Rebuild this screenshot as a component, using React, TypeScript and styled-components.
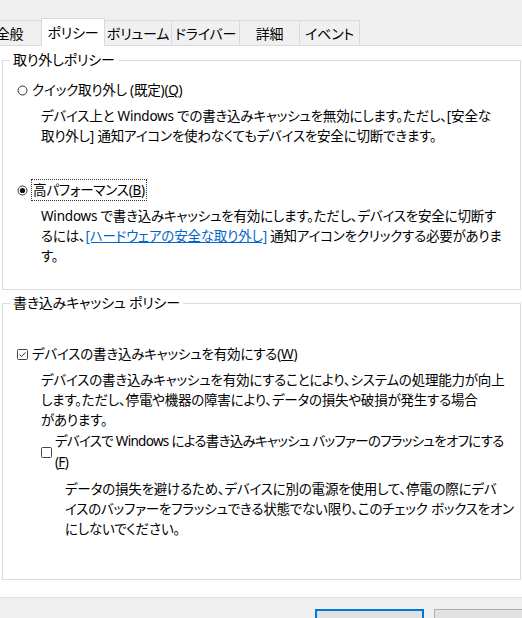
import styled, { createGlobalStyle } from "styled-components"

const GlobalStyle = createGlobalStyle`
  html, body {
    margin: 0;
    padding: 0;
    background: #f0f0f0;
  }
  body {
    font-family: "Noto Sans", "Noto Sans CJK JP", sans-serif;
    font-feature-settings: "palt";
    color: #000;
  }
`

const TABS = [
  { label: "全般", width: 65 },
  { label: "ポリシー", width: 64, selected: true },
  { label: "ボリューム", width: 68 },
  { label: "ドライバー", width: 69 },
  { label: "詳細", width: 61 },
  { label: "イベント", width: 61 },
]

const Window = styled.div`
  width: 522px;
  height: 618px;
  overflow: hidden;
  display: flex;
  flex-direction: column;
  padding-top: 18px;
  box-sizing: border-box;
  font-size: 13.5px;
  letter-spacing: -0.2px;
  line-height: 20px;
`

const TabStrip = styled.div`
  display: flex;
  align-items: flex-end;
  height: 28px;
  flex-shrink: 0;
  margin-left: -23px;
`

const Tab = styled.div<{ $selected?: boolean; $w: number }>`
  width: ${(p) => p.$w}px;
  height: ${(p) => (p.$selected ? 28 : 26)}px;
  box-sizing: border-box;
  flex-shrink: 0;
  margin-right: -1px;
  border: 1px solid #d9d9d9;
  border-bottom: ${(p) => (p.$selected ? "none" : "1px solid #d9d9d9")};
  background: ${(p) => (p.$selected ? "#fff" : "#f0f0f0")};
  display: flex;
  justify-content: center;
  align-items: center;
  padding-top: ${(p) => (p.$selected ? 0 : 1)}px;
  font-size: 14px;
`

const TabFill = styled.div`
  flex: 1;
  border-bottom: 1px solid #d9d9d9;
  margin-left: 1px;
`

const Panel = styled.div`
  flex: 1;
  background: #fff;
  padding: 4px 1px 0 2px;
  display: flex;
  flex-direction: column;
  gap: 3px;
`

const Group = styled.fieldset<{ $h: number; $top: number }>`
  margin: 0;
  height: ${(p) => p.$h}px;
  box-sizing: border-box;
  border: 1px solid #dcdcdc;
  padding: ${(p) => p.$top}px 0 0 14px;
  min-width: 0;
`

const Legend = styled.legend`
  padding: 0 3px;
  margin-left: -7px;
  line-height: 20px;
  font-size: 14px;
`

const OptionRow = styled.div<{ $top?: number }>`
  display: flex;
  align-items: center;
  gap: 4px;
  margin-top: ${(p) => p.$top ?? 0}px;
  white-space: nowrap;
`

const Glyph = styled.svg`
  width: 11px;
  height: 11px;
  flex-shrink: 0;
`

const FocusLabel = styled.span`
  outline: 1px dotted #333;
  outline-offset: 0;
  padding: 0 1px;
`

const Desc = styled.p<{ $indent: number }>`
  margin: 6px 0 0;
  padding-left: ${(p) => p.$indent}px;
  white-space: nowrap;
`

const Key = styled.span`
  text-decoration: underline;
`

const Link = styled.span`
  color: #0066cc;
  text-decoration: underline;
`

const SubOption = styled.div`
  display: flex;
  align-items: center;
  gap: 3px;
  padding-left: 24px;
  margin-top: 1px;
`

const SubText = styled.div`
  white-space: nowrap;
  line-height: 21px;
  letter-spacing: -0.7px;
`

const Footer = styled.div`
  height: 21px;
  flex-shrink: 0;
  background: #f0f0f0;
  border-top: 1px solid #dfdfdf;
  box-sizing: border-box;
  display: flex;
  justify-content: flex-end;
  gap: 10px;
  padding-top: 11px;
  margin-right: -21px;
`

const Button = styled.div<{ $default?: boolean }>`
  width: 109px;
  height: 24px;
  box-sizing: border-box;
  flex-shrink: 0;
  background: #e1e1e1;
  border: 1px solid ${(p) => (p.$default ? "#0078d7" : "#adadad")};
  box-shadow: ${(p) => (p.$default ? "inset 0 0 0 1px #0078d7" : "none")};
`

const RadioIcon = ({ checked }: { checked?: boolean }) => (
  <Glyph viewBox="0 0 11 11">
    <circle cx="5.5" cy="5.5" r="4.5" fill="none" stroke="#333" strokeWidth="1" />
    {checked && <circle cx="5.5" cy="5.5" r="2.6" fill="#111" />}
  </Glyph>
)

const CheckIcon = ({ checked }: { checked?: boolean }) => (
  <Glyph viewBox="0 0 11 11">
    <rect x="0.5" y="0.5" width="10" height="10" rx="1" fill="none" stroke="#444" strokeWidth="1" />
    {checked && (
      <path d="M2.6 5.6 L4.6 7.6 L8.4 3.4" fill="none" stroke="#333" strokeWidth="1" />
    )}
  </Glyph>
)

export default function App() {
  return (
    <Window>
      <GlobalStyle />
      <TabStrip>
        {TABS.map((t) => (
          <Tab key={t.label} $w={t.width} $selected={t.selected}>
            {t.label}
          </Tab>
        ))}
        <TabFill />
      </TabStrip>
      <Panel>
        <Group $h={240} $top={10}>
          <Legend>取り外しポリシー</Legend>
          <OptionRow>
            <RadioIcon />
            <span>
              クイック取り外し (既定)(<Key>Q</Key>)
            </span>
          </OptionRow>
          <Desc $indent={24}>
            デバイス上と Windows での書き込みキャッシュを無効にします。ただし、[安全な
            <br />
            取り外し] 通知アイコンを使わなくてもデバイスを安全に切断できます。
          </Desc>
          <OptionRow $top={34}>
            <RadioIcon checked />
            <FocusLabel>
              高パフォーマンス(<Key>B</Key>)
            </FocusLabel>
          </OptionRow>
          <Desc $indent={24}>
            Windows で書き込みキャッシュを有効にします。ただし、デバイスを安全に切断す
            <br />
            るには、<Link>[ハードウェアの安全な取り外し]</Link> 通知アイコンをクリックする必要がありま
            <br />す。
          </Desc>
        </Group>
        <Group $h={287} $top={31}>
          <Legend>書き込みキャッシュ ポリシー</Legend>
          <OptionRow>
            <CheckIcon checked />
            <span>
              デバイスの書き込みキャッシュを有効にする(<Key>W</Key>)
            </span>
          </OptionRow>
          <Desc $indent={24}>
            デバイスの書き込みキャッシュを有効にすることにより、システムの処理能力が向上
            <br />
            します。ただし、停電や機器の障害により、データの損失や破損が発生する場合
            <br />
            があります。
          </Desc>
          <SubOption>
            <CheckIcon />
            <SubText>
              デバイスで Windows による書き込みキャッシュ バッファーのフラッシュをオフにする
              <br />(<Key>F</Key>)
            </SubText>
          </SubOption>
          <Desc $indent={48}>
            データの損失を避けるため、デバイスに別の電源を使用して、停電の際にデバ
            <br />
            イスのバッファーをフラッシュできる状態でない限り、このチェック ボックスをオン
            <br />
            にしないでください。
          </Desc>
        </Group>
      </Panel>
      <Footer>
        <Button $default />
        <Button />
      </Footer>
    </Window>
  )
}
